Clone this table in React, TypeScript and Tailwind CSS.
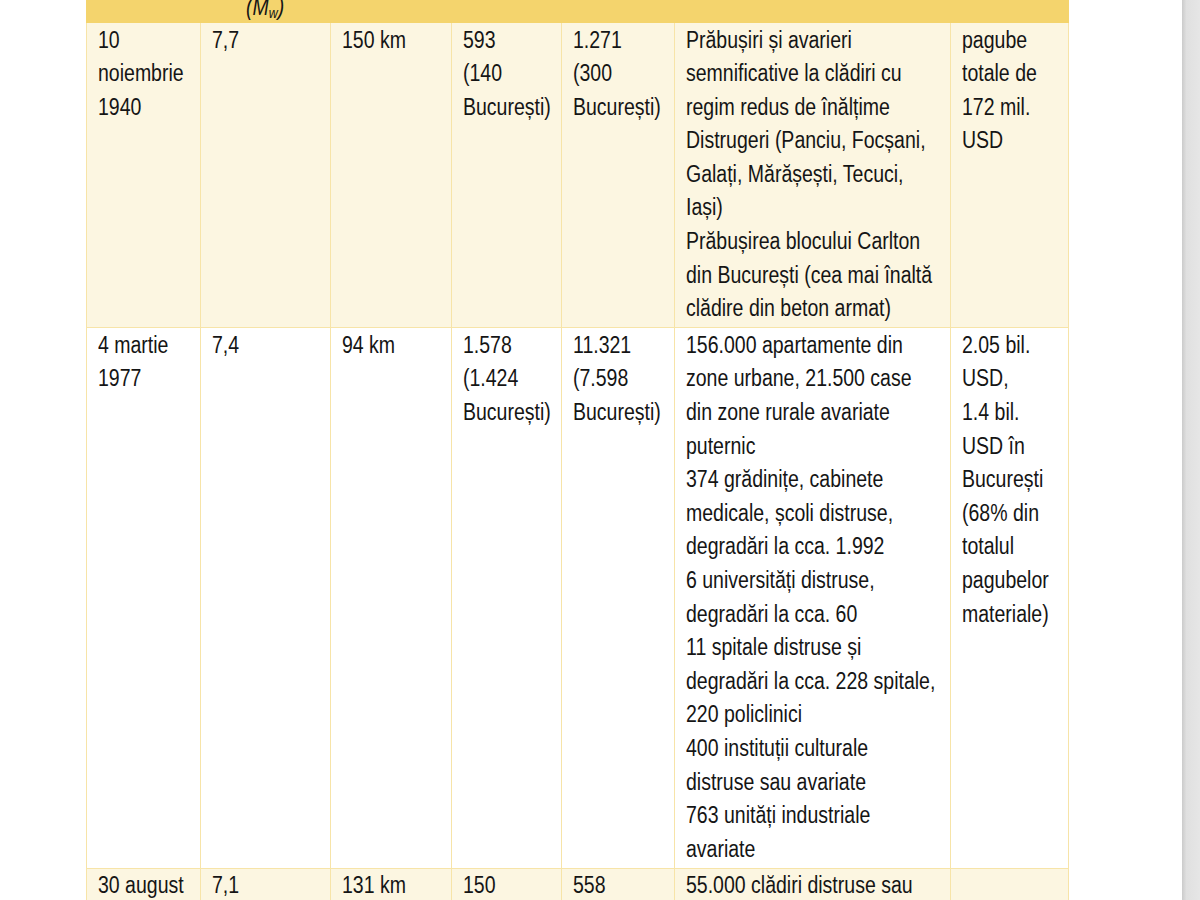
import React from "react";

const COLS = "grid grid-cols-[114px_130px_121px_110px_113px_276px_119px]";

type Row = { bg: string; cells: string[][] };

const rows: Row[] = [
  {
    bg: "bg-[#fcf6e1]",
    cells: [
      ["10", "noiembrie", "1940"],
      ["7,7"],
      ["150 km"],
      ["593", "(140", "București)"],
      ["1.271", "(300", "București)"],
      [
        "Prăbușiri și avarieri",
        "semnificative la clădiri cu",
        "regim redus de înălțime",
        "Distrugeri (Panciu, Focșani,",
        "Galați, Mărășești, Tecuci,",
        "Iași)",
        "Prăbușirea blocului Carlton",
        "din București (cea mai înaltă",
        "clădire din beton armat)",
      ],
      ["pagube", "totale de", "172 mil.", "USD"],
    ],
  },
  {
    bg: "bg-white",
    cells: [
      ["4 martie", "1977"],
      ["7,4"],
      ["94 km"],
      ["1.578", "(1.424", "București)"],
      ["11.321", "(7.598", "București)"],
      [
        "156.000 apartamente din",
        "zone urbane, 21.500 case",
        "din zone rurale avariate",
        "puternic",
        "374 grădinițe, cabinete",
        "medicale, școli distruse,",
        "degradări la cca. 1.992",
        "6 universități distruse,",
        "degradări la cca. 60",
        "11 spitale distruse și",
        "degradări la cca. 228 spitale,",
        "220 policlinici",
        "400 instituții culturale",
        "distruse sau avariate",
        "763 unități industriale",
        "avariate",
      ],
      [
        "2.05 bil.",
        "USD,",
        "1.4 bil.",
        "USD în",
        "București",
        "(68% din",
        "totalul",
        "pagubelor",
        "materiale)",
      ],
    ],
  },
  {
    bg: "bg-[#fcf6e1]",
    cells: [
      ["30 august"],
      ["7,1"],
      ["131 km"],
      ["150"],
      ["558"],
      ["55.000 clădiri distruse sau", "avariate"],
      [""],
    ],
  },
];

export default function App() {
  return (
    <div
      className="flex h-[900px] w-[1200px] overflow-hidden bg-white text-[#151515]"
      style={{ fontFamily: '"Liberation Sans", Arial, sans-serif' }}
    >
      <div className="flex-1 pl-[86px]">
        <div className="w-[983px] text-[23.5px] leading-[33.6px]">
          {/* header row (cut off at top) */}
          <div className={`${COLS} h-[23px] overflow-hidden bg-[#f4d46d]`}>
            <div />
            <div className="flex justify-center">
              <div className="-mt-[9px] italic whitespace-nowrap origin-center scale-x-[0.83]">
                (M<sub className="text-[15px] align-baseline relative top-[3px]">w</sub>)
              </div>
            </div>
            <div />
            <div />
            <div />
            <div />
            <div />
          </div>
          {rows.map((row, ri) => (
            <div key={ri} className={`${COLS} ${row.bg} border-b border-[#f7e4a8]`}>
              {row.cells.map((lines, ci) => (
                <div
                  key={ci}
                  className={`border-l border-[#f7e4a8] pl-[11px] pt-[0.5px] pb-[1.5px] ${ci === 6 ? "border-r" : ""}`}
                >
                  <div className="origin-left scale-x-[0.83]">
                    {lines.map((l, li) => (
                      <div key={li} className="whitespace-nowrap h-[33.6px]">
                        {l}
                      </div>
                    ))}
                  </div>
                </div>
              ))}
            </div>
          ))}
        </div>
      </div>
      <div className="w-[18px] h-full bg-[linear-gradient(to_right,#cbcbcb,#e0e0e0_25%,#e6e6e6)]" />
    </div>
  );
}
